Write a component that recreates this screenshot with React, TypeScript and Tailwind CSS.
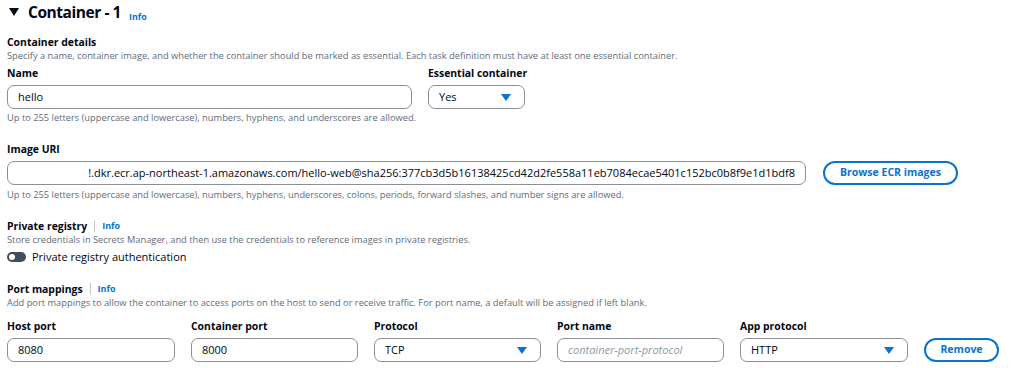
import React from 'react';

const font = { fontFamily: '"Open Sans", "Noto Sans", sans-serif' };

const Caret = () => (
  <svg width="10" height="7" viewBox="0 0 10 7" className="shrink-0">
    <path d="M0 0 H10 L5 7 Z" fill="#0972d3" />
  </svg>
);

const Info = () => <span className="text-[9px] leading-[14px] font-bold text-[#0972d3]">Info</span>;

const Label = ({ children }: { children: React.ReactNode }) => (
  <div className="text-[10.4px] font-bold leading-[14px] text-[#000716]">{children}</div>
);

const Desc = ({ children, className = '' }: { children: React.ReactNode; className?: string }) => (
  <div className={`text-[9.3px] leading-[14px] text-[#5f6b7a] whitespace-nowrap ${className}`}>{children}</div>
);

const Input = ({ value, className = '', placeholder }: { value?: string; className?: string; placeholder?: string }) => (
  <div
    className={`h-[24px] flex items-center px-[10px] border border-[#8c8c94] rounded-[7px] bg-white text-[11px] text-[#000716] overflow-hidden whitespace-nowrap ${className}`}
  >
    {value ? value : <span className="italic text-[#8d99a8]">{placeholder}</span>}
  </div>
);

const Select = ({ value, className = '' }: { value: string; className?: string }) => (
  <div
    className={`h-[24px] flex items-center justify-between pl-[10px] pr-[13px] border border-[#8c8c94] rounded-[7px] bg-white text-[11px] text-[#000716] ${className}`}
  >
    <span>{value}</span>
    <Caret />
  </div>
);

const Field = ({ label, children, className = '' }: { label: string; children: React.ReactNode; className?: string }) => (
  <div className={`flex flex-col gap-[5px] ${className}`}>
    <Label>{label}</Label>
    {children}
  </div>
);

export default function App() {
  return (
    <div style={font} className="w-[1024px] h-[368px] bg-white overflow-hidden px-[7px] text-[#000716]">
      {/* Header */}
      <div className="flex items-center h-[24px]">
        <svg width="10" height="8" viewBox="0 0 10 8" className="ml-[2px] mr-[9px]">
          <path d="M0 0 H10 L5 8 Z" fill="#000716" />
        </svg>
        <span className="text-[15.5px] font-bold leading-[24px] tracking-[-0.45px]">Container - 1</span>
        <span className="ml-[8px] mt-[3px]">
          <Info />
        </span>
      </div>

      {/* Container details */}
      <div className="mt-[11px]">
        <Label>Container details</Label>
        <Desc>
          Specify a name, container image, and whether the container should be marked as essential. Each task definition must have at least one essential container.
        </Desc>
      </div>

      <div className="flex gap-[16px] mt-[3px]">
        <div className="flex flex-col w-[405px]">
          <Field label="Name">
            <Input value="hello" className="w-[405px]" />
          </Field>
          <Desc className="mt-[2px]">
            Up to 255 letters (uppercase and lowercase), numbers, hyphens, and underscores are allowed.
          </Desc>
        </div>
        <Field label="Essential container">
          <Select value="Yes" className="w-[97px]" />
        </Field>
      </div>

      {/* Image URI */}
      <div className="mt-[17px]">
        <div className="flex items-end gap-[17px]">
          <Field label="Image URI" className="gap-[4px]">
            <Input
              value="!.dkr.ecr.ap-northeast-1.amazonaws.com/hello-web@sha256:377cb3d5b16138425cd42d2fe558a11eb7084ecae5401c152bc0b8f9e1d1bdf8"
              className="w-[799px] justify-end"
            />
          </Field>
          <button className="h-[24px] w-[135px] rounded-full border-2 border-[#0972d3] text-[#0972d3] text-[10.5px] font-bold">
            Browse ECR images
          </button>
        </div>
        <Desc className="mt-[3px]">
          Up to 255 letters (uppercase and lowercase), numbers, hyphens, underscores, colons, periods, forward slashes, and number signs are allowed.
        </Desc>
      </div>

      {/* Private registry */}
      <div className="mt-[17px]">
        <div className="flex items-center gap-[7px]">
          <Label>Private registry</Label>
          <span className="w-px h-[12px] bg-[#c6c6cd]" />
          <Info />
        </div>
        <Desc>
          Store credentials in Secrets Manager, and then use the credentials to reference images in private registries.
        </Desc>
        <div className="flex items-center gap-[6px] mt-[2px] h-[16px]">
          <div className="w-[19px] h-[10px] rounded-full bg-[#414d5c] flex items-center pl-[2px]">
            <div className="w-[6px] h-[6px] rounded-full bg-white" />
          </div>
          <span className="text-[11px] leading-[16px]">Private registry authentication</span>
        </div>
      </div>

      {/* Port mappings */}
      <div className="mt-[17px]">
        <div className="flex items-center gap-[7px]">
          <Label>Port mappings</Label>
          <span className="w-px h-[12px] bg-[#c6c6cd]" />
          <Info />
        </div>
        <Desc>
          Add port mappings to allow the container to access ports on the host to send or receive traffic. For port name, a default will be assigned if left blank.
        </Desc>
        <div className="flex items-end gap-[16px] mt-[9px]">
          <Field label="Host port">
            <Input value="8080" className="w-[168px]" />
          </Field>
          <Field label="Container port">
            <Input value="8000" className="w-[167px]" />
          </Field>
          <Field label="Protocol">
            <Select value="TCP" className="w-[167px]" />
          </Field>
          <Field label="Port name">
            <Input placeholder="container-port-protocol" className="w-[167px]" />
          </Field>
          <Field label="App protocol">
            <Select value="HTTP" className="w-[168px]" />
          </Field>
          <button className="h-[24px] w-[75px] rounded-full border-2 border-[#0972d3] text-[#0972d3] text-[10.5px] font-bold">
            Remove
          </button>
        </div>
      </div>
    </div>
  );
}
